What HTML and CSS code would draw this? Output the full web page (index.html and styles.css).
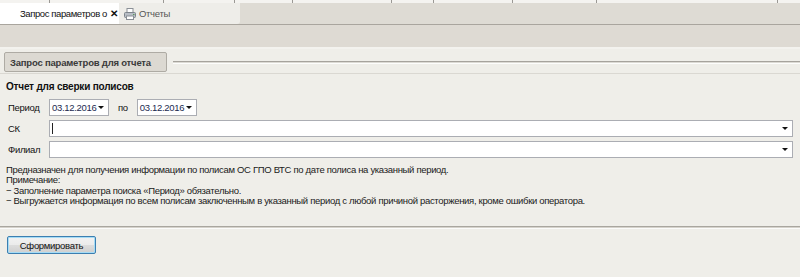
FILE: index.html
```html
<!DOCTYPE html>
<html lang="ru">
<head>
    <meta charset="UTF-8">
    <title>Запрос параметров для отчета</title>
    <link rel="stylesheet" href="styles.css">
</head>
<body>
    <div class="ruler"></div>
    <div class="tabs">
        <div class="tab active">
            <span class="tab-title">Запрос параметров о</span>
            <span class="close">&#x2715;</span>
        </div>
        <div class="tab">
            <svg class="printer" width="12" height="12" viewBox="0 0 12 12">
                <rect x="3" y="0.5" width="6" height="4" fill="#fff" stroke="#8a8f96"/>
                <rect x="0.5" y="4.5" width="11" height="5" rx="1" fill="#b8bec6" stroke="#7d848c"/>
                <rect x="2.5" y="8" width="7" height="3.5" fill="#fff" stroke="#8a8f96"/>
                <rect x="9" y="6" width="1.5" height="1" fill="#5a9a5a"/>
            </svg>
            <span class="tab-title">Отчеты</span>
        </div>
    </div>
    <div class="band"></div>
    <div class="toolbar">
        <button class="group-btn">Запрос параметров для отчета</button>
        <div class="groove"></div>
    </div>

    <main class="form">
        <h3 class="form-title">Отчет для сверки полисов</h3>

        <div class="row">
            <label class="label">Период</label>
            <div class="date">03.12.2016<span class="arrow"></span></div>
            <span class="label-to">по</span>
            <div class="date">03.12.2016<span class="arrow"></span></div>
        </div>
        <div class="row">
            <label class="label">СК</label>
            <div class="combo"><span class="caret"></span><span class="arrow"></span></div>
        </div>
        <div class="row">
            <label class="label">Филиал</label>
            <div class="combo"><span class="arrow"></span></div>
        </div>

        <div class="note">
            <p>Предназначен для получения информации по полисам ОС ГПО ВТС по дате полиса на указанный период.</p>
            <p>Примечание:</p>
            <p>&minus; Заполнение параметра поиска «Период» обязательно.</p>
            <p>&minus; Выгружается информация по всем полисам заключенным в указанный период с любой причиной расторжения, кроме ошибки оператора.</p>
        </div>

        <div class="divider"></div>
        <button class="submit">Сформировать</button>
    </main>
</body>
</html>
```

FILE: styles.css
```css
* {
    box-sizing: border-box;
}

body {
    margin: 0;
    width: 800px;
    height: 277px;
    overflow: hidden;
    background-color: #efeee9;
    font-family: "Liberation Sans", Arial, sans-serif;
    font-size: 9.5px;
    letter-spacing: -0.32px;
    color: #111;
}

.ruler {
    height: 3px;
    background-color: #f4f3f0;
    background-image:
        linear-gradient(#9a9894, #9a9894),
        linear-gradient(#9a9894, #9a9894),
        linear-gradient(#9a9894, #9a9894),
        linear-gradient(#9a9894, #9a9894),
        linear-gradient(#9a9894, #9a9894),
        linear-gradient(#9a9894, #9a9894),
        linear-gradient(#9a9894, #9a9894),
        linear-gradient(#9a9894, #9a9894),
        linear-gradient(#9a9894, #9a9894);
    background-size: 1px 3px;
    background-repeat: no-repeat;
    background-position: 49px 0, 163px 0, 234px 0, 292px 0, 391px 0, 433px 0, 512px 0, 596px 0, 777px 0;
}

.tabs {
    display: flex;
    height: 22px;
    background-color: #dedbd4;
    border-bottom: 1px solid #a9a59e;
}

.tab {
    display: flex;
    align-items: center;
    gap: 3px;
    width: 121px;
    padding: 0 5px;
    background-color: #eeede9;
    border-radius: 0 0 3px 0;
    color: #555;
}

.tab.active {
    width: 119px;
    padding-left: 20px;
    gap: 3px;
    background-color: #fff;
    color: #111;
    border-radius: 0;
    letter-spacing: -0.4px;
}

.tab-title {
    white-space: nowrap;
}

.close {
    font-size: 10px;
    font-weight: bold;
    color: #111;
}

.printer {
    flex: none;
}

.band {
    height: 22px;
    background-color: #dedad3;
}

.toolbar {
    display: flex;
    align-items: center;
    height: 27px;
    padding: 2px 4px 0;
    background-color: #efeee9;
    border-top: 2px solid #f3f2ee;
    border-bottom: 1px solid #dad8d2;
}

.group-btn {
    height: 20px;
    width: 163px;
    padding: 0 0 0 5px;
    text-align: left;
    white-space: nowrap;
    font-family: inherit;
    font-size: 9.5px;
    letter-spacing: -0.2px;
    font-weight: bold;
    color: #3a3a3a;
    background-color: #dcd9d2;
    border: 1px solid #aeaba4;
    border-radius: 2px;
}

.groove {
    flex: 1;
    margin-left: 6px;
    margin-right: -4px;
    height: 3px;
    border-top: 1px solid #a6a39d;
    border-bottom: 1px solid #fdfdfc;
    background-color: #dcdad4;
}

.form {
    padding: 0 7px 0 6px;
}

.form-title {
    margin: 7px 0 7px;
    font-size: 10px;
    letter-spacing: -0.2px;
    font-weight: bold;
    color: #111;
}

.row {
    display: flex;
    align-items: center;
    height: 17px;
    margin-bottom: 4px;
}

.label {
    width: 43px;
    padding-left: 2px;
}

.label-to {
    margin: 0 9px 0 9px;
}

.date {
    display: flex;
    align-items: center;
    justify-content: space-between;
    width: 60px;
    height: 17px;
    padding: 0 4px 0 2px;
    background-color: #fff;
    border: 1px solid #abadb3;
    color: #1c2a50;
}

.combo {
    display: flex;
    align-items: center;
    flex: 1;
    height: 17px;
    padding: 0 4px 0 2px;
    background-color: #fff;
    border: 1px solid #abadb3;
}

.combo .arrow {
    margin-left: auto;
}

.caret {
    width: 1px;
    height: 11px;
    background-color: #222;
}

.arrow {
    width: 0;
    height: 0;
    border-left: 3px solid transparent;
    border-right: 3px solid transparent;
    border-top: 3px solid #111;
}

.note {
    margin-top: 7px;
    color: #1a1a1a;
}

.note p {
    margin: 0;
    line-height: 10.3px;
}

.divider {
    margin: 20px -7px 7px -6px;
    height: 3px;
    border-top: 1px solid #a9a69f;
    border-bottom: 1px solid #fbfbfa;
    background-color: #d5d2cb;
}

.submit {
    width: 89px;
    height: 18px;
    margin-left: 1px;
    padding: 0;
    font-family: inherit;
    font-size: 9.5px;
    letter-spacing: -0.3px;
    color: #111;
    background: linear-gradient(#f2f2f2, #ebebeb 50%, #dddddd 50%, #cfcfcf);
    border: 1px solid #3c7fb1;
    border-radius: 2px;
    box-shadow: inset 0 0 0 1px #a6dcf5;
}
```
